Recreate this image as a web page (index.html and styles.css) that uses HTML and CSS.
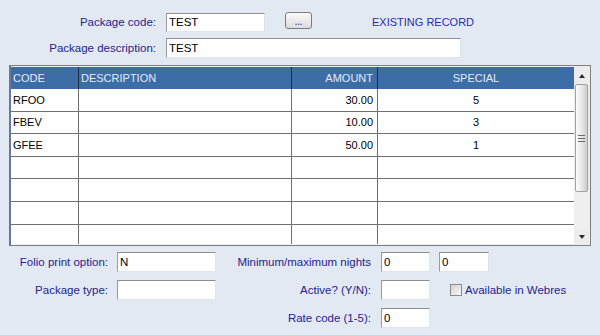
FILE: index.html
```html
<!DOCTYPE html>
<html lang="en">
<head>
    <meta charset="UTF-8">
    <title>Package</title>
    <link rel="stylesheet" href="styles.css">
</head>
<body>
    <div class="top-form">
        <div class="row">
            <label class="label label-top">Package code:</label>
            <input class="field field-code" type="text" value="TEST">
            <button class="browse">...</button>
            <span class="record-state">EXISTING RECORD</span>
        </div>
        <div class="row">
            <label class="label label-top">Package description:</label>
            <input class="field field-desc" type="text" value="TEST">
        </div>
    </div>

    <div class="grid">
        <div class="grid-table">
            <div class="grid-head">
                <div class="cell">CODE</div>
                <div class="cell">DESCRIPTION</div>
                <div class="cell num">AMOUNT</div>
                <div class="cell center">SPECIAL</div>
            </div>
            <div class="grid-row">
                <div class="cell">RFOO</div><div class="cell"></div>
                <div class="cell num">30.00</div><div class="cell center">5</div>
            </div>
            <div class="grid-row">
                <div class="cell">FBEV</div><div class="cell"></div>
                <div class="cell num">10.00</div><div class="cell center">3</div>
            </div>
            <div class="grid-row">
                <div class="cell">GFEE</div><div class="cell"></div>
                <div class="cell num">50.00</div><div class="cell center">1</div>
            </div>
            <div class="grid-row">
                <div class="cell"></div><div class="cell"></div><div class="cell"></div><div class="cell"></div>
            </div>
            <div class="grid-row">
                <div class="cell"></div><div class="cell"></div><div class="cell"></div><div class="cell"></div>
            </div>
            <div class="grid-row">
                <div class="cell"></div><div class="cell"></div><div class="cell"></div><div class="cell"></div>
            </div>
            <div class="grid-row">
                <div class="cell"></div><div class="cell"></div><div class="cell"></div><div class="cell"></div>
            </div>
        </div>
        <div class="scrollbar">
            <div class="scroll-btn"><span class="arrow-up"></span></div>
            <div class="scroll-thumb"><span class="grip"></span></div>
            <div class="scroll-track"></div>
            <div class="scroll-btn scroll-btn-down"><span class="arrow-down"></span></div>
        </div>
    </div>

    <div class="bottom-form">
        <div class="row">
            <label class="label label-left">Folio print option:</label>
            <input class="field field-wide" type="text" value="N">
            <label class="label label-right">Minimum/maximum nights</label>
            <input class="field field-small" type="text" value="0">
            <input class="field field-small second" type="text" value="0">
        </div>
        <div class="row">
            <label class="label label-left">Package type:</label>
            <input class="field field-wide" type="text" value="">
            <label class="label label-right">Active? (Y/N):</label>
            <input class="field field-small" type="text" value="">
            <span class="checkbox"></span>
            <span class="check-text">Available in Webres</span>
        </div>
        <div class="row">
            <span class="spacer"></span>
            <label class="label label-right">Rate code (1-5):</label>
            <input class="field field-small" type="text" value="0">
        </div>
    </div>
</body>
</html>
```

FILE: styles.css
```css
body {
    margin: 0;
    background: #e3e9f2;
    font-family: "Liberation Sans", Arial, sans-serif;
    font-size: 11.5px;
    color: #000;
}

.top-form {
    padding-top: 12px;
}

.row {
    display: flex;
    align-items: center;
    height: 20px;
}

.top-form .row + .row {
    margin-top: 6px;
}

.label {
    color: #23238a;
    text-align: right;
    white-space: nowrap;
}

.label-top {
    width: 156px;
    margin-right: 10px;
}

.field {
    box-sizing: border-box;
    height: 20px;
    margin: 0;
    padding: 0 2px;
    background: #fff;
    border: 1px solid;
    border-color: #8e8e8e #e4e4e4 #e4e4e4 #9a9a9a;
    font-family: "Liberation Sans", Arial, sans-serif;
    font-size: 11.5px;
    color: #000;
    outline: none;
}

.field-code {
    width: 99px;
    height: 19px;
}

.field-desc {
    width: 295px;
}

.browse {
    align-self: flex-start;
    width: 27px;
    height: 17px;
    margin-left: 20px;
    padding: 4px 0 0;
    border: 1px solid #7c7c7c;
    border-radius: 3px;
    background: linear-gradient(#fafafa, #dcdcdc);
    color: #3a6ab0;
    font-size: 9px;
    line-height: 9px;
    font-weight: bold;
}

.record-state {
    margin-left: 60px;
    color: #2b2bb0;
    font-size: 11px;
}

/* grid */

.grid {
    display: flex;
    box-sizing: border-box;
    width: 582px;
    height: 181px;
    margin: 7px 0 0 9px;
    padding: 1px 1px 1px 0;
    border: 1px solid #7f7f7f;
    border-left: 2px solid #65799a;
    background: #eeeeee;
}

.grid-table {
    width: 563px;
    height: 177px;
    overflow: hidden;
    background: #fff;
    font-size: 11px;
}

.grid-head,
.grid-row {
    display: grid;
    grid-template-columns: 68px 213px 86px 196px;
    box-sizing: border-box;
}

.grid-head {
    height: 22px;
    background: #3d6da7;
    color: #e4ebf5;
}

.grid-row {
    height: 22.6px;
    border-bottom: 1px solid #707070;
}

.cell {
    display: flex;
    align-items: center;
    padding: 0 2px;
    border-right: 1px solid #707070;
    white-space: nowrap;
    overflow: hidden;
}

.grid-head .cell {
    border-right-color: #1e2c42;
}

.cell:last-child {
    border-right: none;
}

.cell.num {
    justify-content: flex-end;
    padding-right: 4px;
}

.cell.center {
    justify-content: center;
}

.scrollbar {
    display: flex;
    flex-direction: column;
    width: 15px;
    background: #ececec;
}

.scroll-btn {
    display: flex;
    justify-content: center;
    align-items: center;
    height: 17px;
}

.scroll-btn-down {
    height: 14px;
}

.arrow-up,
.arrow-down {
    width: 0;
    height: 0;
    border-left: 3px solid transparent;
    border-right: 3px solid transparent;
}

.arrow-up {
    border-bottom: 4px solid #2a2a2a;
}

.arrow-down {
    border-top: 4px solid #2a2a2a;
}

.scroll-thumb {
    display: flex;
    justify-content: center;
    align-items: center;
    box-sizing: border-box;
    height: 108px;
    margin: 0 1px;
    border: 1px solid #a3a3a3;
    border-radius: 2px;
    background: linear-gradient(90deg, #fdfdfd, #e6e6e6 55%, #cdcdcd);
}

.grip {
    width: 7px;
    height: 5px;
    border-top: 1px solid #6a6a6a;
    border-bottom: 1px solid #6a6a6a;
    background: linear-gradient(transparent 2px, #6a6a6a 2px, #6a6a6a 3px, transparent 3px);
}

.scroll-track {
    flex: 1;
    background: #efefef;
}

/* bottom form */

.bottom-form {
    margin-top: 6px;
}

.bottom-form .row + .row {
    margin-top: 8px;
}

.label-left {
    width: 108px;
    margin-right: 9px;
}

.field-wide {
    width: 99px;
}

.label-right {
    width: 155px;
    margin-right: 10px;
}

.spacer {
    width: 216px;
}

.field-small {
    width: 49px;
}

.field-small.second {
    width: 50px;
    margin-left: 9px;
}

.checkbox {
    box-sizing: border-box;
    width: 12px;
    height: 12px;
    margin-left: 20px;
    border: 1px solid #8b8b8b;
    background: linear-gradient(135deg, #d2d2d2, #f8f8f8);
}

.check-text {
    margin-left: 3px;
    color: #23238a;
}
```
